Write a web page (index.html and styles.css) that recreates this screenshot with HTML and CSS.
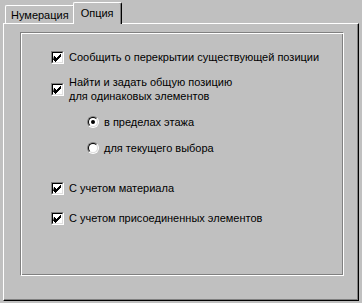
FILE: index.html
```html
<!DOCTYPE html>
<html lang="ru">
<head>
  <meta charset="UTF-8" />
  <title>Опция</title>
  <link rel="stylesheet" href="styles.css">
</head>
<body>
  <div class="tabctl">
    <div class="tabrow">
      <div class="tab">Нумерация</div>
      <div class="tab active">Опция</div>
    </div>
    <div class="panel">
      <div class="group">
        <label class="row row-1">
          <span class="check"><svg width="13" height="13" viewBox="0 0 13 13"><path d="M3 5h1v1h1v1h1v-1h1v-1h1v-1h1v-1h1v3h-1v1h-1v1h-1v1h-1v1h-1v1h-1v-1h-1v-1h-1z" fill="#000"/></svg></span>
          <span class="text">Сообщить о перекрытии существующей позиции</span>
        </label>
        <label class="row row-2">
          <span class="check"><svg width="13" height="13" viewBox="0 0 13 13"><path d="M3 5h1v1h1v1h1v-1h1v-1h1v-1h1v-1h1v3h-1v1h-1v1h-1v1h-1v1h-1v1h-1v-1h-1v-1h-1z" fill="#000"/></svg></span>
          <span class="text">Найти и задать общую позицию<br>для одинаковых элементов</span>
        </label>
        <label class="row radio-row radio-1">
          <span class="radio"><span class="radio-in"><span class="dot"></span></span></span>
          <span class="text">в пределах этажа</span>
        </label>
        <label class="row radio-row radio-2">
          <span class="radio"><span class="radio-in"></span></span>
          <span class="text">для текущего выбора</span>
        </label>
        <label class="row row-3">
          <span class="check"><svg width="13" height="13" viewBox="0 0 13 13"><path d="M3 5h1v1h1v1h1v-1h1v-1h1v-1h1v-1h1v3h-1v1h-1v1h-1v1h-1v1h-1v1h-1v-1h-1v-1h-1z" fill="#000"/></svg></span>
          <span class="text">С учетом материала</span>
        </label>
        <label class="row row-4">
          <span class="check"><svg width="13" height="13" viewBox="0 0 13 13"><path d="M3 5h1v1h1v1h1v-1h1v-1h1v-1h1v-1h1v3h-1v1h-1v1h-1v1h-1v1h-1v1h-1v-1h-1v-1h-1z" fill="#000"/></svg></span>
          <span class="text">С учетом присоединенных элементов</span>
        </label>
      </div>
    </div>
  </div>
</body>
</html>
```

FILE: styles.css
```css
body {
  margin: 0;
  width: 362px;
  height: 303px;
  background: #c0c0c0;
  font-family: "Liberation Sans", Arial, sans-serif;
  font-size: 11px;
  color: #000;
  overflow: hidden;
}

.tabctl {
  margin: 2px 0 0 3px;
  width: 356px;
}

.tabrow {
  display: flex;
  align-items: flex-end;
  height: 21px;
  padding-left: 2px;
}

.tab {
  box-sizing: border-box;
  height: 18px;
  padding: 2px 5px 0 5px;
  line-height: 14px;
  border-top: 1px solid #fff;
  border-left: 1px solid #fff;
  border-right: 1px solid #000;
  box-shadow: inset -1px 0 #808080;
  border-radius: 2px 2px 0 0;
}

.tab.active {
  position: relative;
  z-index: 1;
  height: 22px;
  margin: 0 0 -1px -2px;
  padding: 3px 7px 0 7px;
  background: #c0c0c0;
}

.panel {
  box-sizing: border-box;
  height: 278px;
  padding: 8px 14px 0 16px;
  border-top: 1px solid #fff;
  border-left: 1px solid #fff;
  border-right: 1px solid #000;
  border-bottom: 1px solid #000;
  box-shadow: inset -1px -1px #808080;
}

.group {
  box-sizing: border-box;
  height: 244px;
  padding: 17px 0 0 30px;
  border: 1px solid;
  border-color: #808080 #fff #fff #808080;
  box-shadow: inset 1px 1px #fff, inset -1px -1px #808080;
  display: flex;
  flex-direction: column;
}

.row {
  display: flex;
  align-items: center;
  gap: 5px;
  line-height: 14px;
}

.row-2 { margin-top: 11px; }
.radio-1 { margin-top: 12px; }
.radio-2 { margin-top: 12px; }
.row-3 { margin-top: 26px; }
.row-4 { margin-top: 16px; }

.radio-row {
  padding-left: 36px;
}

.check {
  box-sizing: border-box;
  width: 13px;
  height: 13px;
  flex: none;
  background: #fff;
  border: 1px solid;
  border-color: #808080 #fff #fff #808080;
  position: relative;
}

.check::before {
  content: "";
  position: absolute;
  inset: 0;
  border: 1px solid;
  border-color: #000 #dfdfdf #dfdfdf #000;
}

.check svg {
  position: absolute;
  left: -1px;
  top: -1px;
}

.radio {
  box-sizing: border-box;
  width: 12px;
  height: 12px;
  flex: none;
  border-radius: 50%;
  border: 1px solid;
  border-color: #808080 #fff #fff #808080;
  transform: rotate(0deg);
}

.radio-in {
  box-sizing: border-box;
  display: flex;
  align-items: center;
  justify-content: center;
  width: 10px;
  height: 10px;
  border-radius: 50%;
  border: 1px solid;
  border-color: #000 #dfdfdf #dfdfdf #000;
  background: #fff;
}

.dot {
  width: 4px;
  height: 4px;
  border-radius: 50%;
  background: #000;
}
```
